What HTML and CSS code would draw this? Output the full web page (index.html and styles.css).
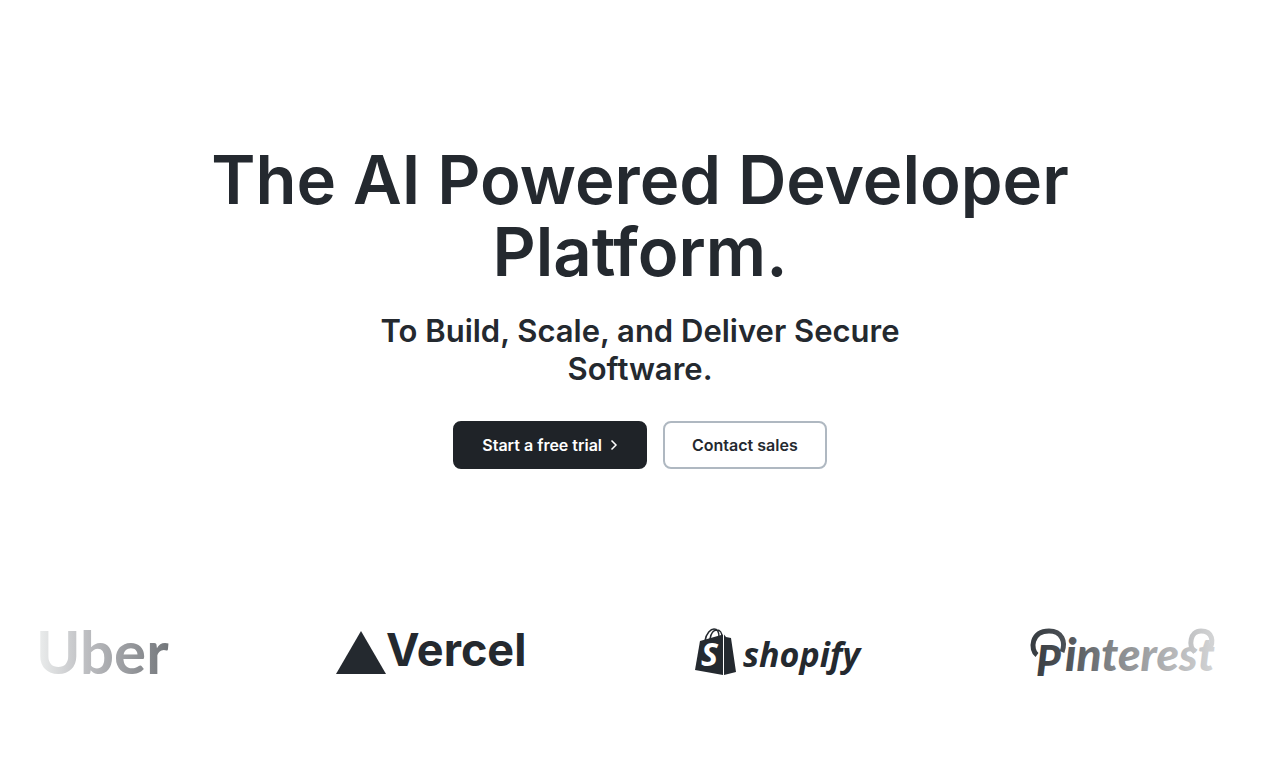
FILE: index.html
```html
<!DOCTYPE html>
<html lang="en">
<head>
<meta charset="utf-8">
<meta name="viewport" content="width=device-width, initial-scale=1">
<title>The AI Powered Developer Platform</title>
<link rel="stylesheet" href="styles.css">
</head>
<body>
<main>
  <section class="hero">
    <h1 class="hero-title">The AI Powered Developer Platform.</h1>
    <p class="hero-subtitle">To Build, Scale, and Deliver Secure Software.</p>
    <div class="actions">
      <button class="button button-primary" type="button">Start a free trial
        <svg class="chevron" viewBox="0 0 8 12" aria-hidden="true"><path d="M1.5 1.5 6 6l-4.500 4.500"/></svg>
      </button>
      <button class="button button-outline" type="button">Contact sales</button>
    </div>
  </section>
  <section class="logos" aria-label="Customers">
    <svg class="logo" width="128" height="50" viewBox="0 0 128 50" role="img" aria-label="Uber">
      <defs><linearGradient id="fade-in" gradientUnits="userSpaceOnUse" x1="0" y1="0" x2="128" y2="0"><stop offset="0" stop-color="#e9ebeb"/><stop offset=".3" stop-color="#c4c5c8"/><stop offset=".7" stop-color="#97999d"/><stop offset="1" stop-color="#73777b"/></linearGradient></defs>
      <text class="word-uber" x="-4" y="46" fill="url(#fade-in)">Uber</text>
    </svg>
    <svg class="logo" width="191" height="50" viewBox="0 0 191 50" role="img" aria-label="Vercel">
      <path d="M25 3 50 46H0Z" fill="#24292f"/>
      <text class="word-vercel" x="50" y="38">Vercel</text>
    </svg>
    <svg class="logo" width="167" height="50" viewBox="0 0 167 50" role="img" aria-label="Shopify">
      <path d="M5 13 28 6.500V47L0 42Z" fill="#24292f"/>
      <path d="M29 6.500 31 9l5 1 5 34-12 3Z" fill="#24292f"/>
      <path d="M10 13C11 5 16 1 19 1s5 3 5 8M15 11c1-6 4-9 7-9s5 3 5 7" fill="none" stroke="#24292f" stroke-width="1.500"/>
      <text class="bag-letter" x="6" y="38">S</text>
      <text class="word-shopify" x="48" y="39">shopify</text>
    </svg>
    <svg class="logo" width="187" height="50" viewBox="0 0 187 50" role="img" aria-label="Pinterest">
      <defs><linearGradient id="fade-out" gradientUnits="userSpaceOnUse" x1="0" y1="0" x2="187" y2="0"><stop offset="0" stop-color="#363b40"/><stop offset=".18" stop-color="#4b5055"/><stop offset=".45" stop-color="#85888b"/><stop offset=".75" stop-color="#b4b5b7"/><stop offset="1" stop-color="#d5d6d7"/></linearGradient></defs>
      <g fill="none" stroke="url(#fade-out)" stroke-width="5">
        <path d="M7 27C0 22 1 3 19 3c13 0 17 11 13 21"/>
        <path d="M165 24c-7-6-5-21 6-21 12 0 13 11 8 19"/>
      </g>
      <text class="word-pinterest" y="43" fill="url(#fade-out)"><tspan class="initial" x="6" y="48">P</tspan><tspan x="35" y="43">interest</tspan></text>
    </svg>
  </section>
</main>
</body>
</html>
```
FILE: styles.css
```css
* { box-sizing: border-box; }
body { margin: 0; background: #fff; color: #24292f; font-family: Inter, "Liberation Sans", sans-serif; }
.hero { display: flex; flex-direction: column; align-items: center; padding: 144px 24px 0; text-align: center; }
.hero-title { max-width: 960px; margin: 0; font-size: 67px; line-height: 72px; font-weight: 600; }
.hero-subtitle { max-width: 580px; margin: 24px 0 0; font-size: 31px; line-height: 38px; font-weight: 600; }
.actions { display: flex; gap: 16px; margin-top: 33px; }
.button { display: flex; align-items: center; gap: 8px; height: 48px; padding: 0 27px; border: 2px solid; border-radius: 8px; font: 600 16px/24px Inter, "Liberation Sans", sans-serif; cursor: pointer; }
.button-primary { background: #1f2328; border-color: #1f2328; color: #fff; }
.button-outline { background: #fff; border-color: #afb8c1; color: #24292f; }
.chevron { width: 8px; height: 12px; fill: none; stroke: currentColor; stroke-width: 1.5; }
.logos { display: flex; justify-content: space-between; align-items: center; padding: 159px 63px 95px 40px; }
.logo { flex: none; overflow: visible; }
.word-uber { font: 700 60px Lato, sans-serif; }
.word-vercel { font: 700 45px Inter, sans-serif; fill: #24292f; }
.word-shopify { font: italic 700 34px "Open Sans", sans-serif; fill: #24292f; }
.bag-letter { font: italic 700 32px "Open Sans", sans-serif; fill: #fff; }
.word-pinterest { font: italic 900 46px Lato, sans-serif; }
.initial { font-size: 42px; }
```
